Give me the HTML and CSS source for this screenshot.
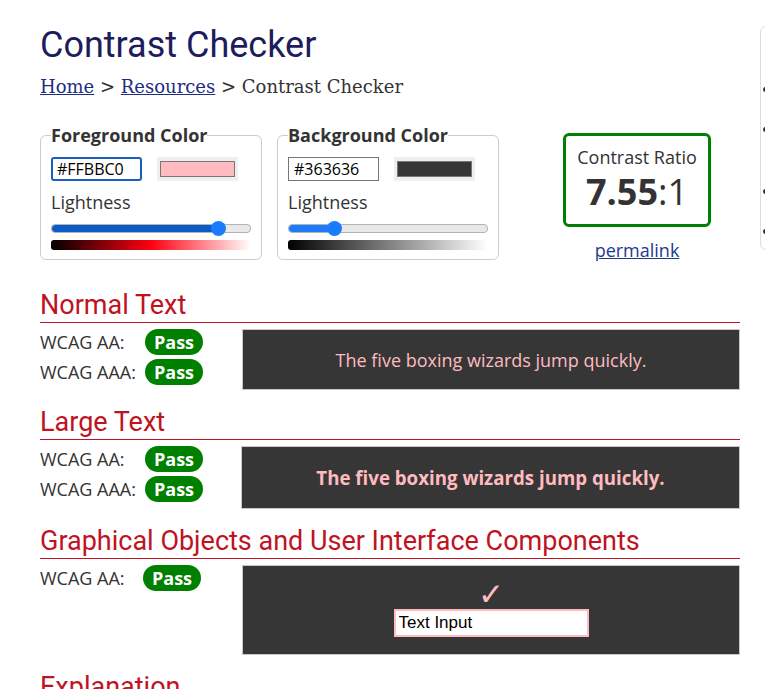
FILE: index.html
```html
<!DOCTYPE html>
<html lang="en">
<head>
    <meta charset="UTF-8">
    <meta name="viewport" content="width=device-width, initial-scale=1.0">
    <title>Contrast Checker</title>
    <link rel="stylesheet" href="styles.css">
</head>
<body>
    <div class="page">
        <main class="content">
            <h1>Contrast Checker</h1>
            <nav class="crumbs">
                <a href="#">Home</a> &gt; <a href="#">Resources</a> &gt; Contrast Checker
            </nav>

            <div class="controls">
                <fieldset class="picker">
                    <legend>Foreground Color</legend>
                    <div class="picker-row">
                        <input class="hex hex-focus" type="text" value="#FFBBC0">
                        <div class="swatch"><span class="swatch-fill fg-fill"></span></div>
                    </div>
                    <div class="picker-label">Lightness</div>
                    <div class="slider">
                        <div class="slider-fill fg-track" style="width: 84%"></div>
                        <div class="slider-thumb" style="left: 84%"></div>
                    </div>
                    <div class="gradient fg-gradient"></div>
                </fieldset>

                <fieldset class="picker">
                    <legend>Background Color</legend>
                    <div class="picker-row">
                        <input class="hex" type="text" value="#363636">
                        <div class="swatch"><span class="swatch-fill bg-fill"></span></div>
                    </div>
                    <div class="picker-label">Lightness</div>
                    <div class="slider">
                        <div class="slider-fill bg-track" style="width: 23%"></div>
                        <div class="slider-thumb" style="left: 23%"></div>
                    </div>
                    <div class="gradient bg-gradient"></div>
                </fieldset>

                <div class="ratio-wrap">
                    <div class="ratio">
                        <div class="ratio-title">Contrast Ratio</div>
                        <div class="ratio-value"><strong>7.55</strong>:1</div>
                    </div>
                    <a class="permalink" href="#">permalink</a>
                </div>
            </div>

            <section class="check">
                <h2>Normal Text</h2>
                <div class="result">
                    <div class="grades">
                        <div class="grade"><span class="grade-name">WCAG AA:</span><span class="badge">Pass</span></div>
                        <div class="grade"><span class="grade-name">WCAG AAA:</span><span class="badge">Pass</span></div>
                    </div>
                    <div class="sample">The five boxing wizards jump quickly.</div>
                </div>
            </section>

            <section class="check">
                <h2>Large Text</h2>
                <div class="result">
                    <div class="grades">
                        <div class="grade"><span class="grade-name">WCAG AA:</span><span class="badge">Pass</span></div>
                        <div class="grade"><span class="grade-name">WCAG AAA:</span><span class="badge">Pass</span></div>
                    </div>
                    <div class="sample sample-large">The five boxing wizards jump quickly.</div>
                </div>
            </section>

            <section class="check">
                <h2>Graphical Objects and User Interface Components</h2>
                <div class="result">
                    <div class="grades">
                        <div class="grade grade-tight"><span class="grade-name">WCAG AA:</span><span class="badge">Pass</span></div>
                    </div>
                    <div class="sample sample-ui">
                        <span class="tick">&#10003;</span>
                        <input class="ui-input" type="text" value="Text Input">
                    </div>
                </div>
            </section>

            <section class="check">
                <h2>Explanation</h2>
            </section>
        </main>

        <aside class="sidebar">
            <ul>
                <li></li>
                <li class="two-line"></li>
                <li></li>
                <li></li>
            </ul>
        </aside>
    </div>
</body>
</html>
```

FILE: styles.css
```css
body {
    font-family: "Open Sans", "Liberation Sans", sans-serif;
    font-size: 18px;
    margin: 0;
    padding: 0;
    background-color: #fff;
    color: #333;
    overflow: hidden;
}
.page {
    display: flex;
    gap: 20px;
    padding: 24px 0 0 40px;
}
.content {
    width: 700px;
    flex: none;
}
h1 {
    font-family: Roboto, sans-serif;
    font-size: 36px;
    font-weight: 400;
    line-height: 42px;
    color: #1d1d5c;
    margin: 0;
}
.crumbs {
    font-family: "DejaVu Serif", serif;
    font-size: 18px;
    line-height: 22px;
    margin-top: 10px;
    color: #333;
}
.crumbs a {
    color: #1e2d80;
}

/* color pickers */
.controls {
    display: flex;
    align-items: flex-start;
    margin-top: 25px;
}
.picker {
    width: 222px;
    box-sizing: border-box;
    margin: 0 15px 0 0;
    padding: 0 10px 9px;
    border: 1px solid #ccc;
    border-radius: 6px;
}
.picker legend {
    padding: 0;
    font-weight: bold;
    line-height: 24px;
}
.picker-row {
    display: flex;
    gap: 15px;
    margin-top: 10px;
}
.hex {
    width: 91px;
    height: 24px;
    box-sizing: border-box;
    border: 1px solid #767676;
    padding: 0 5px;
    font-family: "Open Sans", sans-serif;
    font-size: 16px;
    color: #000;
    outline: none;
}
.hex-focus {
    border: 2px solid #1a5fbf;
    border-radius: 3px;
    padding: 0 4px;
}
.swatch {
    width: 81px;
    height: 24px;
    box-sizing: border-box;
    padding: 4px 3px;
    background-color: #efefef;
}
.swatch-fill {
    display: block;
    height: 100%;
    box-sizing: border-box;
    border: 1px solid #777;
}
.fg-fill {
    background-color: #ffbbc0;
}
.bg-fill {
    background-color: #363636;
}
.picker-label {
    margin-top: 9px;
    line-height: 24px;
}
.slider {
    position: relative;
    height: 7px;
    margin: 10px 0 7px;
    background-color: #e9e9e9;
    border: 1px solid #b3b3b3;
    border-radius: 4px;
}
.slider-fill {
    height: 100%;
    border-radius: 4px 0 0 4px;
}
.fg-track {
    background-color: #0b5cc4;
}
.bg-track {
    background-color: #1a7cfc;
}
.slider-thumb {
    position: absolute;
    top: 50%;
    width: 15px;
    height: 15px;
    margin: -7.5px 0 0 -7.5px;
    border-radius: 50%;
    background-color: #1a7cfc;
}
.gradient {
    height: 10px;
    border-radius: 3px 0 0 3px;
}
.fg-gradient {
    background: linear-gradient(to right, #000, hsl(356, 100%, 50%), #fff);
}
.bg-gradient {
    background: linear-gradient(to right, #000, #fff);
}

/* ratio box */
.ratio-wrap {
    margin: 10px 0 -3px 49px;
    width: 148px;
    text-align: center;
}
.ratio {
    border: 3px solid #008000;
    border-radius: 6px;
    height: 94px;
    box-sizing: border-box;
    padding-top: 9px;
}
.ratio-title {
    line-height: 24px;
}
.ratio-value {
    font-size: 36px;
    line-height: 46px;
}
.permalink {
    display: inline-block;
    margin-top: 11px;
    color: #1e3a8a;
}

/* result sections */
.check {
    margin-top: 17px;
}
.controls + .check {
    margin-top: 30px;
}
.check h2 {
    font-family: Roboto, sans-serif;
    font-size: 27px;
    font-weight: 400;
    line-height: 30px;
    color: #c0121f;
    margin: 0;
    padding-bottom: 2px;
    border-bottom: 1px solid #c0121f;
}
.result {
    display: grid;
    grid-template-columns: 202px 1fr;
    margin-top: 6px;
}
.grades {
    display: flex;
    flex-direction: column;
    gap: 4px;
}
.grade {
    display: flex;
    align-items: center;
    height: 26px;
}
.grade-name {
    width: 105px;
}
.grade-tight .grade-name {
    width: 103px;
}
.badge {
    width: 58px;
    height: 26px;
    line-height: 26px;
    border-radius: 13px;
    background-color: #008000;
    color: #fff;
    font-weight: bold;
    text-align: center;
}
.sample {
    height: 61px;
    display: flex;
    align-items: center;
    justify-content: center;
    background-color: #363636;
    border: 1px solid #c8c8c8;
    box-sizing: border-box;
    color: #ffbbc0;
}
.sample-large {
    height: 63px;
    margin-left: -1px;
    font-size: 18.7px;
    font-weight: bold;
}
.sample-ui {
    height: 90px;
    flex-direction: column;
    justify-content: flex-start;
    gap: 4px;
    padding-top: 18px;
}
.tick {
    font-family: "DejaVu Sans", sans-serif;
    font-size: 31px;
    line-height: 21px;
    color: #ffbbc0;
}
.ui-input {
    width: 195px;
    height: 28px;
    box-sizing: border-box;
    border: 2px solid #ffbbc0;
    padding: 0 3px;
    font-family: "Liberation Sans", Arial, sans-serif;
    font-size: 17px;
    color: #000;
}

/* sidebar */
.sidebar {
    flex: none;
    width: 240px;
    margin-top: 2px;
    height: 224px;
    box-sizing: border-box;
    border: 1px solid #ddd;
    border-radius: 6px;
    padding: 51px 14px 0 2px;
}
.sidebar ul {
    list-style: none;
    margin: 0;
    padding: 0;
}
.sidebar li {
    height: 22px;
    margin-bottom: 18px;
}
.sidebar li.two-line {
    height: 42px;
    margin-bottom: 20px;
}
.sidebar li::before {
    content: "";
    display: block;
    margin-top: 9px;
    width: 5px;
    height: 5px;
    border-radius: 50%;
    background-color: #333;
}
```
